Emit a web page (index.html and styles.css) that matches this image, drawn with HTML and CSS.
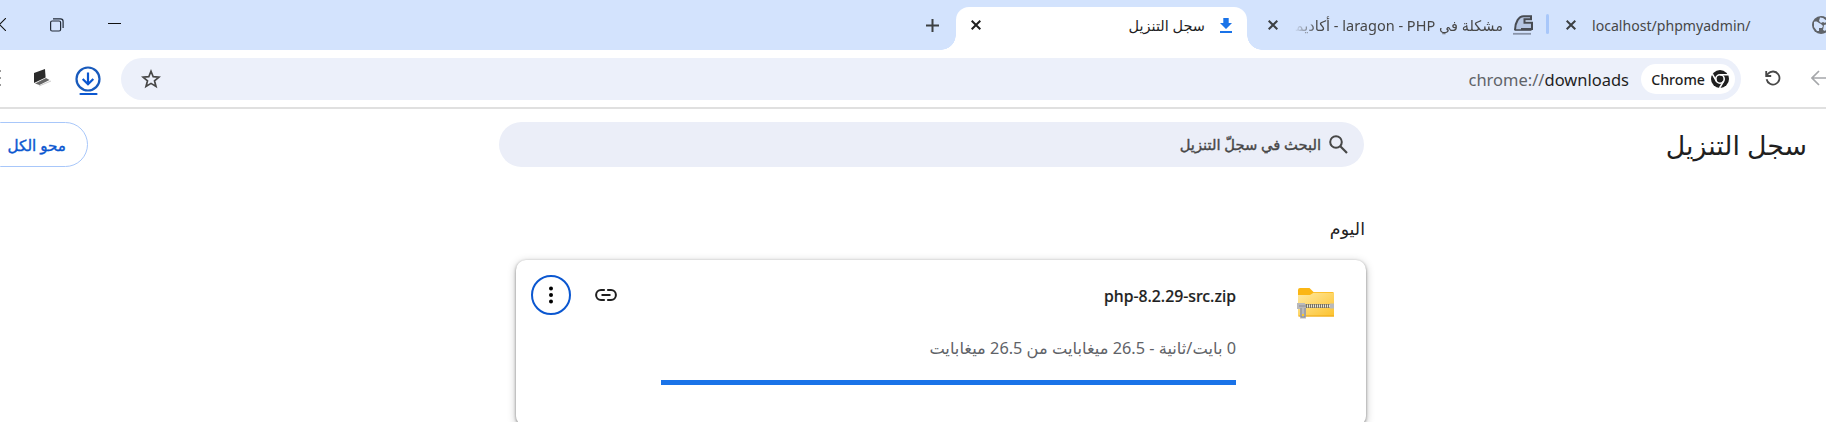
FILE: index.html
```
<!DOCTYPE html>
<html lang="ar" dir="rtl">
<head>
  <meta charset="UTF-8">
  <title>سجل التنزيل</title>
  <meta name="viewport" content="width=device-width, initial-scale=1.0">
  <link rel="stylesheet" href="styles.css">
</head>
<body>
  <div class="tabstrip">
    <div class="tab tab-local">
      <svg class="globe" width="18" height="18" viewBox="0 0 18 18"><circle cx="9" cy="9" r="9" fill="#5f6368"/><path d="M2 6c2-1 4 0 5 1l2 1 2 2-1 2-3 0 0 3-2 0-3-4zM8 1.500l3 .5 4 3-2 2-2-1-2 1-2-2zM12 9l4-1 0 3-3 4-2-1z" fill="#d3e3fd"/></svg>
      <span class="tab-title" dir="ltr">localhost/phpmyadmin/</span>
      <svg class="close" width="10" height="10" viewBox="0 0 10 10"><path d="M.7.7l8.600 8.600M9.300.7L.7 9.300"/></svg>
    </div>
    <div class="divider"></div>
    <div class="tab tab-laragon">
      <svg width="20" height="20" viewBox="0 0 20 20"><path d="M2.500 14.500C2 7 6 1.500 10 1.500h8v3h-6v4h6.500v5.500H13z" fill="#b5c5e2"/><path d="M2 15C2 7 6 1.200 10.500 1.200H18v3h-6.500v3.600H19v6.200H8" fill="none" stroke="#474b52" stroke-width="2"/><path d="M1.500 15h17" stroke="#474b52" stroke-width="1.600"/><path d="M0 18.800h18" stroke="#8893a8" stroke-width="1.800"/></svg>
      <span class="tab-title">مشكلة في laragon - PHP - أكاديم&zwj;</span>
      <svg class="close" width="10" height="10" viewBox="0 0 10 10"><path d="M.7.7l8.600 8.600M9.300.7L.7 9.300"/></svg>
    </div>
    <div class="tab tab-active">
      <svg width="12" height="15" viewBox="0 0 12 15"><path d="M3.300 0h5.400v5H12L6 11 0 5h3.300zM0 13h12v2H0z" fill="#1a73e8"/></svg>
      <span class="tab-title">سجل التنزيل</span>
      <svg class="close" width="10" height="10" viewBox="0 0 10 10"><path d="M.7.7l8.600 8.600M9.300.7L.7 9.300"/></svg>
    </div>
    <svg class="new-tab" width="13" height="13" viewBox="0 0 13 13"><path d="M6.500 0v13M0 6.500h13" stroke="#3c4043" stroke-width="2"/></svg>
    <div class="window-buttons">
      <svg width="13" height="13" viewBox="0 0 13 13"><path d="M0 5.500h13" stroke="#111" stroke-width="1"/></svg>
      <svg width="14" height="14" viewBox="0 0 14 14"><rect x=".6" y="3" width="10" height="10" rx="1.500" fill="none" stroke="#222b38" stroke-width="1.200"/><path d="M3 .9h7.500a2.600 2.600 0 0 1 2.600 2.600V10" fill="none" stroke="#222b38" stroke-width="1.200"/></svg>
      <svg width="13" height="13" viewBox="0 0 13 13"><path d="M0 0l13 13M13 0L0 13" stroke="#111" stroke-width="1.100"/></svg>
    </div>
  </div>

  <div class="toolbar">
    <svg class="back" width="18" height="16" viewBox="0 0 18 16"><path d="M8 1L1 8l7 7M1 8h17" fill="none" stroke="#a5a7aa" stroke-width="1.700"/></svg>
    <svg class="reload" width="16" height="16" viewBox="0 0 16 16"><path d="M1.600 9.300a6.500 6.500 0 1 0 1.500-5.600L1.300 5.600" fill="none" stroke="#474747" stroke-width="1.800"/><path d="M1.200 1v5h5" fill="none" stroke="#474747" stroke-width="1.800"/></svg>
    <div class="omnibox">
      <div class="chip">
        <svg width="18" height="18" viewBox="0 0 18 18"><circle cx="9" cy="9" r="9" fill="#1f1f1f"/><circle cx="9" cy="9" r="4.200" fill="none" stroke="#fff" stroke-width="1.600"/><path d="M9 4.800h8M5.400 11.100L1.400 4.200M12.600 11.100l-4 6.900" stroke="#fff" stroke-width="1.600"/></svg>
        <span class="chip-text">Chrome</span>
      </div>
      <span class="url" dir="ltr"><span class="scheme">chrome://</span>downloads</span>
      <svg class="star" width="20" height="20" viewBox="0 0 20 20"><path d="M10 2.300l2.200 5.400 5.800.4-4.500 3.700 1.500 5.700-5-3.100-5 3.100 1.500-5.700L2 8.100l5.800-.4z" fill="none" stroke="#474747" stroke-width="1.700"/></svg>
    </div>
    <svg class="downloads" width="26" height="30" viewBox="0 0 26 30"><circle cx="13" cy="13" r="11.500" fill="none" stroke="#185abc" stroke-width="2.200"/><path d="M13 6.500V18M7.700 13l5.300 5.200 5.300-5.200" fill="none" stroke="#0b57d0" stroke-width="2.200"/><path d="M5.500 28h16" stroke="#0b57d0" stroke-width="2.200" stroke-linecap="round"/></svg>
    <svg class="laptop" width="18" height="18" viewBox="0 0 18 18"><path d="M0 4L11 0l.6 8.500L0 14z" fill="#2b2b2b"/><path d="M1 14.500L12 9l3.500 2-10 5z" fill="#666"/><path d="M5 17l12-5" stroke="#ccc" stroke-width="1"/></svg>
    <svg class="grip" width="2" height="18" viewBox="0 0 2 18"><path d="M0 1h1v2H0zM0 8h1v2H0zM0 15h1v2H0z" fill="#999"/></svg>
  </div>

  <div class="page-header">
    <h1>سجل التنزيل</h1>
    <div class="search">
      <svg width="19" height="19" viewBox="0 0 19 19"><circle cx="7" cy="7" r="5.800" fill="none" stroke="#474747" stroke-width="2"/><path d="M11.300 11.300l6.700 6.700" stroke="#474747" stroke-width="2.200"/></svg>
      <span class="search-text">البحث في سجلّ التنزيل</span>
    </div>
    <button class="clear-all">محو الكل</button>
  </div>

  <div class="downloads-list">
    <div class="date">اليوم</div>
    <div class="card">
      <svg class="file-icon" width="37" height="31" viewBox="0 0 37 31">
        <defs><linearGradient id="folder" x1="0" y1="0" x2="1" y2="1"><stop offset="0" stop-color="#ffe9a0"/><stop offset="1" stop-color="#fcc22e"/></linearGradient></defs>
        <path d="M1 2a2 2 0 0 1 2-2h9.500l4 4H35.500a1.500 1.500 0 0 1 1.500 1.500V12H1z" fill="#fbb614"/>
        <path d="M1 7h12l3.500-2.200H37V28.500H2.500A1.500 1.500 0 0 1 1 27z" fill="url(#folder)"/>
        <path d="M1.500 28h35.500" stroke="#eda817"/>
        <path d="M8 18h26" stroke="#77715f" stroke-width="4"/>
        <path d="M8 18h26" stroke="#e9e5d5" stroke-width="3" stroke-dasharray="1 1"/>
        <path d="M0 15h8v6H0zM33 15.500h4v5h-4zM3 17h6v13.500H3z" fill="#b9b9bb"/>
        <path d="M2 18h7M4 20v9h4v-9" fill="none" stroke="#8c8c90"/><path d="M5 26h2v2H5z" fill="#ffc928"/>
      </svg>
      <div class="details">
        <div class="file-name" dir="ltr">php-8.2.29-src.zip</div>
        <div class="status">0 بايت/ثانية - 26.5 ميغابايت من 26.5 ميغابايت</div>
        <div class="progress"></div>
      </div>
      <svg class="link" width="22" height="12" viewBox="0 0 22 12"><path d="M9.800 1.100H6a4.900 4.900 0 0 0 0 9.800h3.800M12.200 1.100H16a4.900 4.900 0 0 1 0 9.800h-3.800M6.500 6h9" fill="none" stroke="#1f1f1f" stroke-width="2"/></svg>
      <button class="more"><svg width="4" height="18" viewBox="0 0 4 18"><circle cx="2" cy="2.500" r="2"/><circle cx="2" cy="9" r="2"/><circle cx="2" cy="15.500" r="2"/></svg></button>
    </div>
  </div>
</body>
</html>
```
FILE: styles.css
```
* {
  box-sizing: border-box;
}
body {
  margin: 0;
  height: 422px;
  overflow: hidden;
  background: #fff;
  color: #1f1f1f;
  font-family: 'Noto Sans', 'Open Sans', 'DejaVu Sans', sans-serif;
}
svg {
  display: block;
  flex: none;
}
span, h1, button, .date, .file-name, .status {
  white-space: nowrap;
}

/* tabs */
.tabstrip {
  display: flex;
  height: 50px;
  background: #d3e3fd;
}
.tab {
  display: flex;
  align-items: center;
  flex: none;
  height: 43px;
  margin-top: 7px;
  padding-bottom: 7px;
  font-size: 14px;
  color: #474747;
}
.tab-title {
  flex: none;
}
.close {
  stroke: #3c4043;
  stroke-width: 2;
  margin-right: auto;
}
.tab-local {
  width: 264px;
  margin-right: -4px;
}
.tab-local .tab-title {
  width: 160px;
  margin-right: 60px;
  font-size: 14.1px;
}
.divider {
  width: 3px;
  height: 20px;
  margin: 14px 17px 0 13px;
  border-radius: 2px;
  background: #a8c7fa;
}
.tab-laragon {
  width: 265px;
}
.tab-laragon .tab-title {
  width: 209px;
  margin-right: 10px;
  font-size: 14.5px;
  -webkit-mask-image: linear-gradient(to right, transparent, #000 24px);
  mask-image: linear-gradient(to right, transparent, #000 24px);
}
.tab-active {
  position: relative;
  width: 291px;
  margin-right: 21px;
  padding-right: 15px;
  padding-left: 15px;
  border-radius: 13px 13px 0 0;
  background: #fff;
  color: #1f1f1f;
}
.tab-active::before, .tab-active::after {
  content: "";
  position: absolute;
  bottom: 0;
  width: 15px;
  height: 15px;
}
.tab-active::before {
  right: -15px;
  background: radial-gradient(circle at 100% 0, transparent 14.5px, #fff 15px);
}
.tab-active::after {
  left: -15px;
  background: radial-gradient(circle at 0 0, transparent 14.5px, #fff 15px);
}
.tab-active .tab-title {
  margin-right: 15px;
  font-size: 14.5px;
}
.tab-active .close {
  stroke: #1f1f1f;
}
.new-tab {
  margin: 19px 17px 0 0;
}
.window-buttons {
  display: flex;
  gap: 44px;
  margin: 18px auto 0 -7px;
}

/* address bar */
.toolbar {
  display: flex;
  align-items: center;
  height: 59px;
  padding-bottom: 1px;
  border-bottom: 2px solid #e0e0e0;
}
.back {
  margin-right: -3px;
}
.reload {
  margin-right: 30px;
}
.omnibox {
  display: flex;
  align-items: center;
  flex: none;
  width: 1620px;
  height: 42px;
  margin: 2px 24px 0 0;
  padding: 0 6px 0 20px;
  border-radius: 21px;
  background: #ecf0fa;
}
.chip {
  display: flex;
  align-items: center;
  width: 94px;
  height: 30px;
  padding-right: 6px;
  border-radius: 15px;
  background: #fff;
}
.chip-text {
  margin-right: 6px;
  font-size: 14.2px;
  font-weight: 500;
}
.url {
  margin-right: 12px;
  font-size: 16.5px;
}
.scheme {
  color: #5f6368;
}
.star {
  margin-right: auto;
}
.downloads {
  margin: 5px 20px 0 0;
}
.laptop {
  margin-right: 23px;
}
.grip {
  margin-right: auto;
}

/* page header */
.page-header {
  display: flex;
  height: 58px;
  padding-top: 13px;
}
h1 {
  width: 442px;
  margin: 0;
  padding-right: 19px;
  font-size: 26.8px;
  font-weight: 400;
  line-height: 46px;
}
.search {
  display: flex;
  align-items: center;
  width: 865px;
  height: 45px;
  margin-right: 20px;
  padding-right: 16px;
  border-radius: 23px;
  background: #ebeef8;
  color: #474747;
}
.search-text {
  margin: 0 8px 2px 0;
  font-size: 14.7px;
  -webkit-text-stroke: .4px;
}
.clear-all {
  width: 110px;
  height: 45px;
  margin: 0 auto 0 -22px;
  padding: 0 21px 0 0;
  border: 1px solid #a8c7fa;
  border-radius: 23px;
  background: #fff;
  color: #0b57d0;
  font: 400 15.2px 'Noto Sans', 'DejaVu Sans', sans-serif;
  text-align: right;
  -webkit-text-stroke: .4px;
}

/* downloads */
.downloads-list {
  width: 850px;
  margin-right: 460px;
}
.date {
  height: 93px;
  padding: 49px 1px 0 0;
  font-size: 17.4px;
  line-height: 24px;
}
.card {
  display: flex;
  height: 166px;
  padding: 28px 32px 0 15px;
  border-radius: 10px;
  background: #fff;
  box-shadow: 0 1px 3px rgba(0, 0, 0, .4), 0 2px 8px rgba(0, 0, 0, .25);
}
.details {
  width: 575px;
  margin-right: 61px;
}
.file-name {
  height: 50px;
  font-size: 15.8px;
  font-weight: 500;
  line-height: 16px;
  text-align: right;
  -webkit-text-stroke: .2px;
}
.status {
  height: 42px;
  font-size: 16.3px;
  line-height: 20px;
  color: #5f6368;
}
.progress {
  height: 5px;
  background: #1a73e8;
}
.link {
  margin: 1px 44px 0 0;
}
.more {
  display: flex;
  align-items: center;
  justify-content: center;
  flex: none;
  width: 40px;
  height: 40px;
  margin: -13px auto 0 0;
  padding: 0;
  border: 2px solid #0b57d0;
  border-radius: 50%;
  background: #fff;
}
```
